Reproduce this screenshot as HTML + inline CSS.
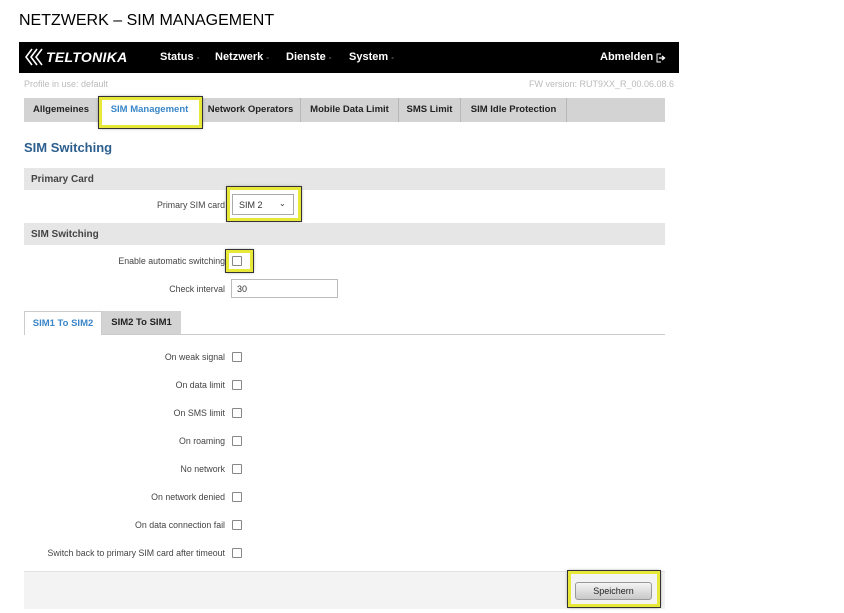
<!DOCTYPE html>
<html><head><meta charset="utf-8"><style>
*{margin:0;padding:0;box-sizing:border-box}
body{width:844px;height:613px;background:#fff;position:relative;overflow:hidden;font-family:"Liberation Sans",Arial,sans-serif;color:#333}
.a{position:absolute}
.cb{position:absolute;left:232px;width:10px;height:10px;border:1px solid #888;border-radius:1px;background:#fff}
.lbl{position:absolute;right:619px;font-size:8.8px;color:#444;white-space:nowrap}
.hl{position:absolute;border:3px solid #e8e83a;outline:1px solid #333;box-shadow:0 0 3px #666}
.tab{position:absolute;top:98px;height:24px;line-height:24px;font-size:9.5px;font-weight:bold;color:#222;text-align:center;border-right:1px solid #b8b8b8}
.nav{position:absolute;top:51px;font-size:11px;font-weight:bold;color:#fff;white-space:nowrap}
.nav span{color:#777;font-size:8px}
</style></head><body>
<div class="a" style="left:19px;top:12px;font-size:16px;color:#000">NETZWERK – SIM MANAGEMENT</div>
<div class="a" style="left:19px;top:42px;width:660px;height:31px;background:#000"></div>
<svg class="a" style="left:24px;top:47px" width="24" height="20" viewBox="0 0 24 20"><g fill="none" stroke="#fff" stroke-width="1.6"><path d="M8 2 L2 10 L8 18"/><path d="M13 2 L7 10 L13 18"/><path d="M18 2 L12 10 L18 18"/></g></svg>
<div class="a" style="left:46px;top:49px;font-size:14px;font-weight:bold;font-style:italic;color:#fff;letter-spacing:0.3px">TELTONIKA</div>
<div class="nav" style="left:160px">Status <span>-</span></div>
<div class="nav" style="left:215px">Netzwerk <span>-</span></div>
<div class="nav" style="left:286px">Dienste <span>-</span></div>
<div class="nav" style="left:349px">System <span>-</span></div>
<div class="a" style="left:600px;top:51px;font-size:11px;font-weight:bold;color:#fff">Abmelden</div>
<svg class="a" style="left:656px;top:53px" width="10" height="10" viewBox="0 0 10 10"><path d="M5 1 H1 V9 H5" fill="none" stroke="#fff" stroke-width="1"/><path d="M3 5 H8 M6 3 L8.5 5 L6 7" fill="none" stroke="#fff" stroke-width="1.3"/></svg>
<div class="a" style="left:24px;top:79px;font-size:9px;color:#bbb">Profile in use: default</div>
<div class="a" style="left:529px;top:79px;font-size:9px;color:#bbb">FW version: RUT9XX_R_00.06.08.6</div>
<div class="a" style="left:24px;top:98px;width:641px;height:24px;background:#d3d3d3"></div>
<div class="tab" style="left:24px;width:75px">Allgemeines</div>
<div class="tab" style="left:99px;width:102px;background:#fff;color:#3a86c8;height:26px">SIM Management</div>
<div class="tab" style="left:201px;width:100px">Network Operators</div>
<div class="tab" style="left:301px;width:98px">Mobile Data Limit</div>
<div class="tab" style="left:399px;width:62px">SMS Limit</div>
<div class="tab" style="left:461px;width:106px">SIM Idle Protection</div>
<div class="hl" style="left:99px;top:97px;width:103px;height:31px"></div>
<div class="a" style="left:24px;top:140px;font-size:13px;font-weight:bold;color:#2d5f8e">SIM Switching</div>
<div class="a" style="left:24px;top:168px;width:641px;height:22px;background:#e6e6e6"></div>
<div class="a" style="left:31px;top:174px;font-size:10px;font-weight:bold;color:#444">Primary Card</div>
<div class="lbl" style="top:200px">Primary SIM card</div>
<div class="a" style="left:232px;top:194px;width:62px;height:21px;border:1px solid #aaa;background:#fff;font-size:9px;padding:5px 6px;color:#333">SIM 2<span style="position:absolute;left:46px;top:4px;font-size:8px">⌄</span></div>
<div class="hl" style="left:227px;top:187px;width:74px;height:34px"></div>
<div class="a" style="left:24px;top:223px;width:641px;height:22px;background:#e6e6e6"></div>
<div class="a" style="left:31px;top:229px;font-size:10px;font-weight:bold;color:#444">SIM Switching</div>
<div class="lbl" style="top:256px">Enable automatic switching</div>
<div class="cb" style="top:256px"></div>
<div class="hl" style="left:226px;top:250px;width:27px;height:22px"></div>
<div class="lbl" style="top:284px">Check interval</div>
<div class="a" style="left:231px;top:279px;width:107px;height:19px;border:1px solid #bbb;font-size:9px;padding:4px 5px">30</div>
<div class="a" style="left:24px;top:334px;width:641px;height:1px;background:#ccc"></div>
<div class="a" style="left:24px;top:311px;width:78px;height:24px;border:1px solid #ccc;border-bottom:none;background:#fff;font-size:9.5px;font-weight:bold;color:#3a86c8;text-align:center;line-height:23px">SIM1 To SIM2</div>
<div class="a" style="left:102px;top:311px;width:79px;height:23px;background:#d3d3d3;font-size:9.5px;font-weight:bold;color:#222;text-align:center;line-height:23px">SIM2 To SIM1</div>
<div class="lbl" style="top:352px">On weak signal</div><div class="cb" style="top:352px"></div>
<div class="lbl" style="top:380px">On data limit</div><div class="cb" style="top:380px"></div>
<div class="lbl" style="top:408px">On SMS limit</div><div class="cb" style="top:408px"></div>
<div class="lbl" style="top:436px">On roaming</div><div class="cb" style="top:436px"></div>
<div class="lbl" style="top:464px">No network</div><div class="cb" style="top:464px"></div>
<div class="lbl" style="top:492px">On network denied</div><div class="cb" style="top:492px"></div>
<div class="lbl" style="top:520px">On data connection fail</div><div class="cb" style="top:520px"></div>
<div class="lbl" style="top:548px">Switch back to primary SIM card after timeout</div><div class="cb" style="top:548px"></div>
<div class="a" style="left:24px;top:571px;width:641px;height:38px;background:#f3f3f3;border-top:1px solid #e2e2e2"></div>
<div class="a" style="left:575px;top:582px;width:77px;height:18px;border:1px solid #999;border-radius:3px;background:linear-gradient(#f4f4f4,#c8c8c8);font-size:9px;text-align:center;line-height:16px;color:#222">Speichern</div>
<div class="hl" style="left:568px;top:571px;width:92px;height:36px"></div>
</body></html>
